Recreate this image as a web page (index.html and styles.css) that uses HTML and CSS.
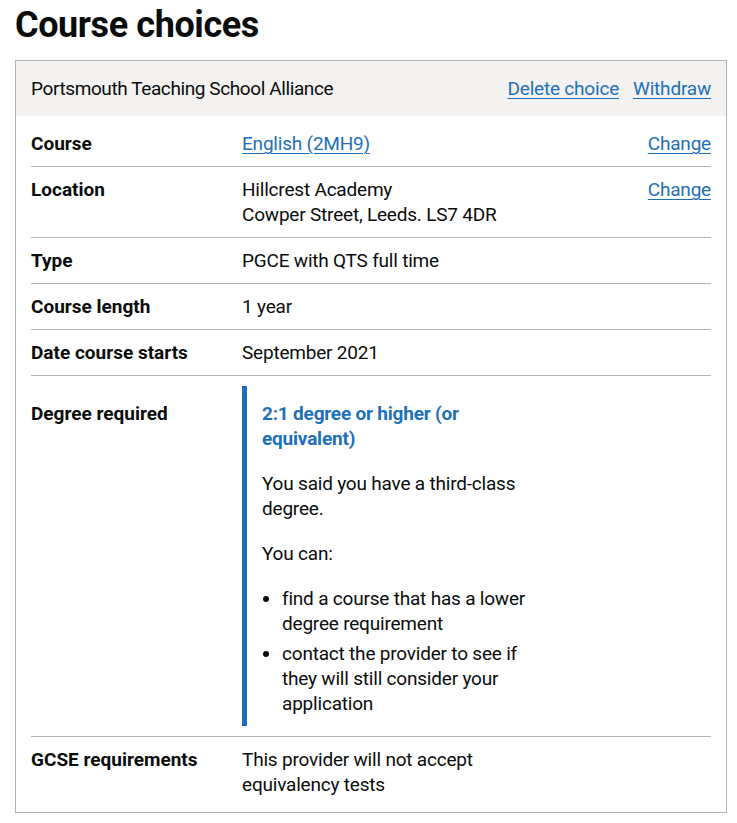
FILE: index.html
```html
<!DOCTYPE html>
<html lang="en">
<head>
<meta charset="utf-8">
<title>Course choices</title>
<link rel="stylesheet" href="styles.css">
</head>
<body>
<main class="page">
  <h1 class="title">Course choices</h1>
  <section class="card">
    <header class="card-header">
      <h2 class="provider">Portsmouth Teaching School Alliance</h2>
      <div class="card-actions">
        <a class="link" href="#">Delete choice</a>
        <a class="link" href="#">Withdraw</a>
      </div>
    </header>
    <dl class="summary">
      <div class="row">
        <dt class="key">Course</dt>
        <dd class="value"><a class="link" href="#">English (2MH9)</a></dd>
        <dd class="actions"><a class="link" href="#">Change</a></dd>
      </div>
      <div class="row">
        <dt class="key">Location</dt>
        <dd class="value">Hillcrest Academy<br>Cowper Street, Leeds. LS7 4DR</dd>
        <dd class="actions"><a class="link" href="#">Change</a></dd>
      </div>
      <div class="row">
        <dt class="key">Type</dt>
        <dd class="value">PGCE with QTS full time</dd>
        <dd class="actions"></dd>
      </div>
      <div class="row">
        <dt class="key">Course length</dt>
        <dd class="value">1 year</dd>
        <dd class="actions"></dd>
      </div>
      <div class="row">
        <dt class="key">Date course starts</dt>
        <dd class="value">September 2021</dd>
        <dd class="actions"></dd>
      </div>
      <div class="row">
        <dt class="key key-offset">Degree required</dt>
        <dd class="value">
          <div class="inset">
            <p class="inset-title">2:1 degree or higher (or equivalent)</p>
            <p class="inset-text">You said you have a third-class degree.</p>
            <p class="inset-text">You can:</p>
            <ul class="inset-list">
              <li>find a course that has a lower degree requirement</li>
              <li>contact the provider to see if they will still consider your application</li>
            </ul>
          </div>
        </dd>
        <dd class="actions"></dd>
      </div>
      <div class="row">
        <dt class="key">GCSE requirements</dt>
        <dd class="value">This provider will not accept equivalency tests</dd>
        <dd class="actions"></dd>
      </div>
    </dl>
  </section>
</main>
</body>
</html>
```

FILE: styles.css
```css
* { box-sizing: border-box; }

html, body {
  margin: 0;
  padding: 0;
  background: #ffffff;
}

body {
  font-family: Roboto, "Liberation Sans", Arial, sans-serif;
  font-size: 19px;
  line-height: 25px;
  color: #0b0c0c;
  letter-spacing: -0.2px;
}

.page {
  width: 712px;
  margin-left: 15px;
  padding-top: 5px;
}

.title {
  margin: 0 0 15px;
  font-size: 36px;
  line-height: 40px;
  font-weight: 700;
  letter-spacing: -0.4px;
}

.link {
  color: #1d70b8;
  text-decoration: underline;
  text-decoration-thickness: 1px;
  text-underline-offset: 0.16em;
}

.card {
  border: 1px solid #b1b4b6;
}

.card-header {
  display: flex;
  justify-content: space-between;
  align-items: flex-start;
  padding: 15px;
  background: #f3f2f1;
}

.provider {
  margin: 0;
  font-size: 19px;
  line-height: 25px;
  font-weight: 400;
  letter-spacing: -0.4px;
}

.card-actions {
  display: flex;
  gap: 14px;
}

.summary {
  margin: 0;
  padding: 5px 15px;
}

.row {
  display: grid;
  grid-template-columns: 211px 338px 1fr;
  border-bottom: 1px solid #b1b4b6;
}

.row:last-child {
  border-bottom: 0;
}

.key,
.value,
.actions {
  margin: 0;
  padding: 10px 0;
}

.key {
  font-weight: 700;
  padding-right: 20px;
  letter-spacing: 0;
}

.key-offset {
  padding-top: 25px;
}

.value {
  padding-right: 20px;
}

.actions {
  text-align: right;
}

.inset {
  border-left: 5px solid #1d70b8;
  padding: 15px 15px 10px 15px;
}

.inset-title {
  margin: 0 0 20px;
  font-weight: 700;
  color: #1d70b8;
}

.inset-text {
  margin: 0 0 20px;
}

.inset-list {
  margin: 0;
  padding-left: 20px;
}

.inset-list li {
  margin-bottom: 5px;
}

.inset-list li:last-child {
  margin-bottom: 0;
}
```
